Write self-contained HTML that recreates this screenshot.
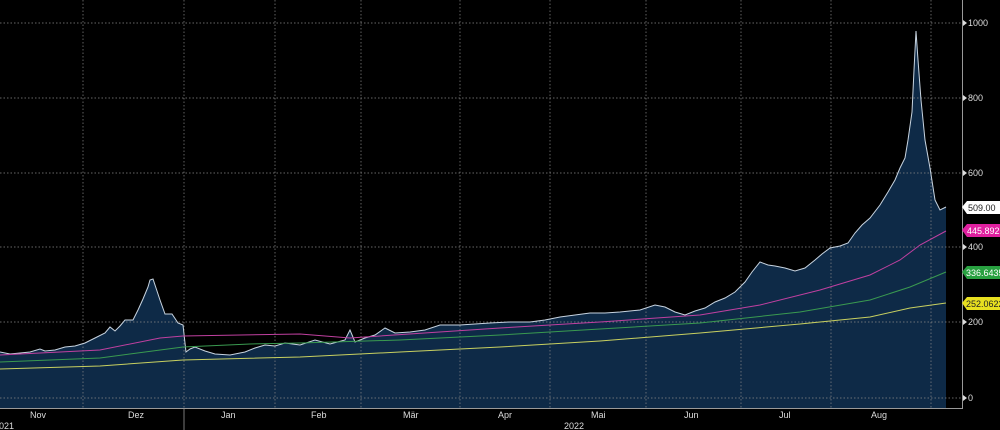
<!DOCTYPE html>
<html><head><meta charset="utf-8"><style>
html,body{margin:0;padding:0;background:#000;width:1000px;height:430px;overflow:hidden}
svg{display:block}
text{font-family:"Liberation Sans",sans-serif;font-size:9px;fill:#ddd}
</style></head><body>
<svg width="1000" height="430" viewBox="0 0 1000 430">
<rect width="1000" height="430" fill="#000"/>
<path d="M0,352 L10,354 L20,353 L30,352 L40,349 L45,351 L55,350 L65,347 L75,346 L85,343 L95,338 L105,333 L110,327 L115,331 L120,326 L125,320 L133,320 L138,310 L143,299 L148,287 L150,280 L153,279 L156,288 L160,300 L165,314 L172,314 L178,323 L183,325 L186,352 L190,349 L195,347 L205,351 L215,354 L230,355 L245,352 L255,348 L265,345 L275,346 L285,343 L300,345 L315,340 L330,344 L345,340 L350,330 L355,342 L365,338 L375,335 L385,328 L395,333 L410,332 L425,330 L440,325 L460,325 L475,324 L490,323 L510,322 L530,322 L545,320 L560,317 L575,315 L590,313 L605,313 L620,312 L640,310 L655,305 L665,307 L675,312 L685,315 L695,311 L705,308 L715,302 L725,298 L735,292 L745,282 L752,272 L760,262 L768,265 L775,266 L785,268 L795,271 L805,268 L815,260 L822,254 L830,248 L840,246 L848,243 L855,233 L862,225 L870,218 L880,205 L888,192 L895,180 L900,168 L905,158 L908,140 L912,112 L914,70 L916,31 L918,60 L921,100 L925,140 L930,168 L935,200 L940,210 L946,207 L946,408 L0,408 Z" fill="#0e2a47"/>
<g stroke="#888" stroke-width="0.7" stroke-dasharray="1.5,2" fill="none">
<path d="M0,23H962M0,98H962M0,173H962M0,247H962M0,322H962M0,398H962"/>
<path d="M83,0V408M184,0V408M275,0V408M361,0V408M460,0V408M550,0V408M646,0V408M741,0V408M831,0V408M931,0V408"/>
</g>
<path d="M0,352 L10,354 L20,353 L30,352 L40,349 L45,351 L55,350 L65,347 L75,346 L85,343 L95,338 L105,333 L110,327 L115,331 L120,326 L125,320 L133,320 L138,310 L143,299 L148,287 L150,280 L153,279 L156,288 L160,300 L165,314 L172,314 L178,323 L183,325 L186,352 L190,349 L195,347 L205,351 L215,354 L230,355 L245,352 L255,348 L265,345 L275,346 L285,343 L300,345 L315,340 L330,344 L345,340 L350,330 L355,342 L365,338 L375,335 L385,328 L395,333 L410,332 L425,330 L440,325 L460,325 L475,324 L490,323 L510,322 L530,322 L545,320 L560,317 L575,315 L590,313 L605,313 L620,312 L640,310 L655,305 L665,307 L675,312 L685,315 L695,311 L705,308 L715,302 L725,298 L735,292 L745,282 L752,272 L760,262 L768,265 L775,266 L785,268 L795,271 L805,268 L815,260 L822,254 L830,248 L840,246 L848,243 L855,233 L862,225 L870,218 L880,205 L888,192 L895,180 L900,168 L905,158 L908,140 L912,112 L914,70 L916,31 L918,60 L921,100 L925,140 L930,168 L935,200 L940,210 L946,207" fill="none" stroke="#c8d4e0" stroke-width="1"/>
<polyline points="0,355 100,350 160,338 183,336 300,334 350,338 500,328 600,322 700,315 760,305 820,290 870,275 900,260 920,245 946,231" fill="none" stroke="#c040a0" stroke-width="1"/>
<polyline points="0,362 100,358 183,347 250,344 300,343 400,340 500,335 600,329 700,323 800,312 870,300 910,287 946,272" fill="none" stroke="#3a9a50" stroke-width="1"/>
<polyline points="0,369 100,366 183,360 300,357 400,352 500,347 600,341 700,333 800,324 870,317 910,308 946,303" fill="none" stroke="#c8d060" stroke-width="1"/>
<line x1="0" y1="408.5" x2="962" y2="408.5" stroke="#999" stroke-width="1"/>
<line x1="962.5" y1="0" x2="962.5" y2="409" stroke="#999" stroke-width="1"/>
<line x1="184" y1="409" x2="184" y2="430" stroke="#777" stroke-width="1"/>
<g fill="#ddd">
<path d="M963,20l4,3l-4,3z"/><path d="M963,95l4,3l-4,3z"/><path d="M963,170l4,3l-4,3z"/><path d="M963,244l4,3l-4,3z"/><path d="M963,319l4,3l-4,3z"/><path d="M963,395l4,3l-4,3z"/>
</g>
<text x="968" y="26">1000</text><text x="968" y="101">800</text><text x="968" y="176">600</text><text x="968" y="250">400</text><text x="968" y="325">200</text><text x="968" y="401">0</text>
<path d="M962,207 L967,201 H1000 V214 H967 Z" fill="#fff"/>
<text x="968" y="211" style="fill:#222">509.00</text>
<path d="M962,230 L967,224 H1000 V237 H967 Z" fill="#e020a0"/>
<text x="967" y="234" style="fill:#fff">445.892</text>
<path d="M962,272 L967,266 H1000 V279 H967 Z" fill="#28a040"/>
<text x="966" y="276" style="fill:#fff">336.6435</text>
<path d="M962,303 L967,297 H1000 V310 H967 Z" fill="#e8e020"/>
<text x="966" y="307" style="fill:#222">252.0622</text>
<text x="30" y="418">Nov</text><text x="128" y="418">Dez</text><text x="221" y="418">Jan</text><text x="311" y="418">Feb</text><text x="403" y="418">Mär</text><text x="498" y="418">Apr</text><text x="591" y="418">Mai</text><text x="684" y="418">Jun</text><text x="779" y="418">Jul</text><text x="871" y="418">Aug</text>
<text x="-6" y="429">2021</text><text x="564" y="429">2022</text>
</svg>
</body></html>
